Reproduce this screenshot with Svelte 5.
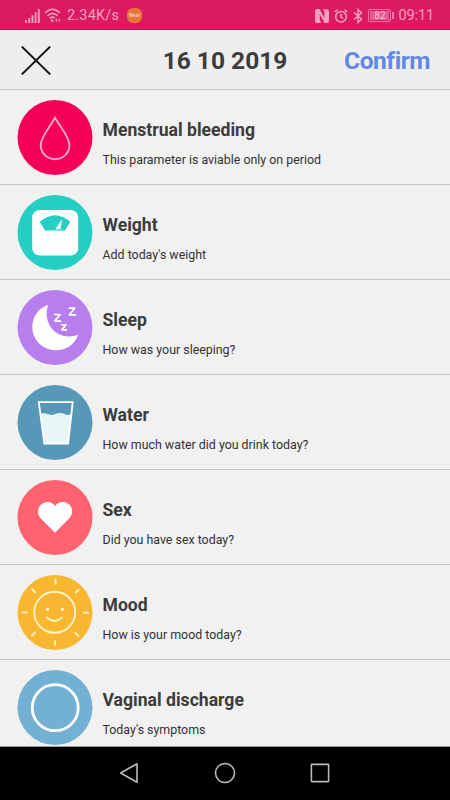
<script lang="ts">
  type Entry = { id: string; title: string; hint: string; color: string };

  const entries: Entry[] = [
    { id: 'bleeding', title: 'Menstrual bleeding', hint: 'This parameter is aviable only on period', color: '#f50057' },
    { id: 'weight', title: 'Weight', hint: "Add today's weight", color: '#25cfc3' },
    { id: 'sleep', title: 'Sleep', hint: 'How was your sleeping?', color: '#b97eee' },
    { id: 'water', title: 'Water', hint: 'How much water did you drink today?', color: '#5798b9' },
    { id: 'sex', title: 'Sex', hint: 'Did you have sex today?', color: '#ff6370' },
    { id: 'mood', title: 'Mood', hint: 'How is your mood today?', color: '#f9b631' },
    { id: 'discharge', title: 'Vaginal discharge', hint: "Today's symptoms", color: '#72b1d4' },
  ];

  const rays = [0, 45, 90, 135, 180, 225, 270, 315];
</script>

<div class="screen">
  <div class="status">
    <svg class="signal" width="15" height="14" viewBox="0 0 15 14">
      <path d="M1 11v3M4.2 9v5M7.4 6.3v7.7M10.6 3.3v10.7M13.8 0v14" />
    </svg>
    <svg class="wifi" width="17" height="15" viewBox="0 0 17 15">
      <path d="M1 5Q8.5-2.5 16 5M3.4 7.8Q8.5 3 13.6 7.8M5.8 10.4Q8.5 8 10.8 10.2" />
      <circle cx="8.2" cy="12.8" r="1.3" />
      <path class="solid" d="M11.2 12.2l1.8-2v4zM16.6 12.2l-1.8-2v4z" />
    </svg>
    <span class="speed">2.34K/s</span>
    <span class="wear">Wear</span>
    <div class="status-right">
      <svg class="nfc" width="14" height="14" viewBox="0 0 14 14">
        <path class="solid" d="M2 0h2.6l4.8 9.2V3.2L8 .3h4Q14 .3 14 2.3v9.4Q14 14 12 14H9.6L4.8 4.8v6L6.2 13.9H2Q0 13.9 0 11.7V2Q0 0 2 0z" />
        <path d="M3.4 11.6V2.6l7.2 9V2.4" />
      </svg>
      <svg class="alarm" width="14" height="14" viewBox="0 0 14 14">
        <circle cx="7" cy="7.7" r="5.3" />
        <path d="M7 4.7v3.4l2.3 1.2M.7 3L3.5.8M13.3 3L10.5.8" />
      </svg>
      <svg class="bluetooth" width="10" height="16" viewBox="0 0 10 16">
        <path d="M1 4.5l7.6 6.8L5 14.5v-13l3.6 3.2L1 11.5" />
      </svg>
      <span class="battery"><span>82</span></span>
      <span class="clock">09:11</span>
    </div>
  </div>

  <header>
    <button class="close" aria-label="Close">
      <svg width="30" height="29" viewBox="0 0 30 29">
        <path d="M.8.6L29.2 28.4M29.2.6L.8 28.4" />
      </svg>
    </button>
    <h1>16 10 2019</h1>
    <button class="confirm">Confirm</button>
  </header>

  <main>
    {#each entries as entry (entry.id)}
      <div class="row">
        <svg class="icon" width="76" height="75" viewBox="-0.5 0 76 75">
          <circle cx="37.5" cy="37.5" r="37.5" fill={entry.color} />
          {#if entry.id === 'bleeding'}
            <path class="drop" d="M37.5 17.6C34 25 23.2 36.5 23.2 45.2a14.4 14 0 0 0 28.8 0C52 36.5 41 25 37.5 17.6z" />
          {:else if entry.id === 'weight'}
            <rect x="14.7" y="15" width="46" height="45.5" rx="7.5" fill="#fff" />
            <path d="M22.2 26.8Q37.5 13.5 52.8 26.8L47.5 35.5H27.5z" fill={entry.color} />
            <path d="M37.8 34.2L44.4 24.2L43.2 34.2z" fill="#fff" />
          {:else if entry.id === 'sleep'}
            <path d="M30.7 14.8C20 18.5 14.8 28 14.8 37.3A23.2 23 0 0 0 38 60.3C48.5 60.3 57.5 54.5 60.7 44.8C55 47 47.5 47.3 41 44C31 39 26.5 26.5 30.7 14.8z" fill="#fff" />
            <path class="zed" d="M36.6 24.5h6.2l-5.8 6.6h6.8" />
            <path class="zed" d="M51.2 18.2h6.2l-5.8 6.6h7" />
            <path class="zed" d="M43.8 34.8h4.8l-4.4 5.1h5.4" />
          {:else if entry.id === 'water'}
            <path d="M22.8 28.7Q27 27.5 31 29.2T39 28.6Q43 27 47 29T53.6 29L50.5 58.3H26.5z" fill="#e8f6f8" />
            <path class="glass" d="M21.3 17.2H55.2L50.6 58.5H26.8z" />
          {:else if entry.id === 'sex'}
            <path d="M37.5 52.8L23.4 38.6C18.7 33.8 20.2 26.8 24.6 23.8C29 20.8 34.7 21.7 37.5 26.2C40.3 21.7 46.7 20.8 50.8 23.8C55.2 26.8 56.3 33.8 51.6 38.6z" fill="#fff" />
          {:else if entry.id === 'mood'}
            <g class="sun">
              <circle cx="37.2" cy="37.3" r="20.5" />
              {#each rays as angle}
                <path d="M38 4.8v4.3" transform="rotate({angle} 37.8 37.6)" />
              {/each}
              <path d="M29 42.6Q37 49.2 44.6 42.6" />
              <circle class="eye" cx="30" cy="34.3" r="1.7" />
              <circle class="eye" cx="45" cy="34.3" r="1.7" />
            </g>
          {:else}
            <circle class="ring" cx="37.7" cy="37.7" r="23" />
          {/if}
        </svg>
        <div class="text">
          <h2>{entry.title}</h2>
          <p>{entry.hint}</p>
        </div>
      </div>
    {/each}
  </main>

  <nav>
    <svg width="20" height="22" viewBox="0 0 20 22">
      <path d="M18 1.8v18.4L1.6 11z" />
    </svg>
    <svg width="22" height="22" viewBox="0 0 22 22">
      <circle cx="11" cy="11" r="9.5" />
    </svg>
    <svg width="20" height="20" viewBox="0 0 20 20">
      <rect x="1.4" y="1.4" width="17.2" height="17.2" rx=".5" />
    </svg>
  </nav>
</div>

<style>
  :global(body) {
    margin: 0;
  }

  .screen {
    width: 450px;
    height: 800px;
    display: flex;
    flex-direction: column;
    overflow: hidden;
    background: #f1f1f1;
    font-family: Roboto, sans-serif;
    color: #3c3c3c;
  }

  svg {
    display: block;
    flex: none;
    fill: none;
  }

  .status {
    flex: none;
    box-sizing: border-box;
    height: 30px;
    padding: 2px 16px 0 25px;
    display: flex;
    align-items: center;
    background: #db1a61;
    border-bottom: 1px solid #c0114f;
    color: #f79fc2;
    font-size: 14.5px;
  }

  .status svg {
    stroke: #f79fc2;
    stroke-width: 1.5;
  }

  .status .signal {
    stroke-width: 1.9;
  }

  .wifi {
    margin-left: 4px;
  }

  .wifi circle,
  .status .solid {
    fill: #f79fc2;
    stroke: none;
  }

  .speed {
    margin-left: 6px;
    width: 60px;
    letter-spacing: 0.2px;
    white-space: nowrap;
  }

  .wear {
    width: 15px;
    height: 15px;
    border-radius: 6px;
    background: #e8743d;
    color: #fbc3a3;
    font-size: 5px;
    font-weight: 700;
    line-height: 15px;
    text-align: center;
  }

  .status-right {
    margin-left: auto;
    display: flex;
    align-items: center;
  }

  .alarm,
  .bluetooth {
    margin-left: 5px;
  }

  .battery {
    position: relative;
    box-sizing: border-box;
    width: 23px;
    height: 13px;
    margin: 0 7px 0 5px;
    padding: 1px;
    border: 1px solid #f079a8;
    border-radius: 2px;
    font-size: 10px;
    line-height: 9px;
    text-align: center;
    color: #fbc4d9;
  }

  .battery span {
    display: block;
    height: 9px;
    background: #e9588f;
  }

  .battery::after {
    content: '';
    position: absolute;
    right: -4px;
    top: 2px;
    width: 2px;
    height: 7px;
    background: #f079a8;
  }

  .clock {
    letter-spacing: -0.1px;
  }

  header {
    flex: none;
    box-sizing: border-box;
    height: 60px;
    padding: 2px 20px 0 21px;
    display: grid;
    grid-template-columns: 1fr auto 1fr;
    align-items: center;
    background: #eee;
    border-bottom: 1px solid #c4c4c4;
  }

  button {
    padding: 0;
    border: 0;
    background: none;
    font-family: inherit;
  }

  .close {
    justify-self: start;
  }

  .close svg {
    margin-top: -1px;
  }

  .close path {
    stroke: #161616;
    stroke-width: 2;
  }

  h1 {
    margin: 0 1px 0 0;
    font-size: 24.5px;
    font-weight: 700;
  }

  .confirm {
    justify-self: end;
    color: #6488e6;
    font-size: 24.5px;
    font-weight: 700;
    letter-spacing: -0.45px;
    font-variant-ligatures: common-ligatures;
  }

  main {
    flex: 1;
    overflow: hidden;
  }

  .row {
    box-sizing: border-box;
    height: 95px;
    padding: 10px 17px 0;
    display: flex;
    border-bottom: 1px solid #c6c6c6;
  }

  .text {
    margin-left: 9.5px;
    padding-top: 19px;
  }

  h2 {
    margin: 0;
    font-size: 17.6px;
    font-weight: 700;
    line-height: 22px;
  }

  p {
    margin: 11px 0 0;
    font-size: 12.4px;
    line-height: 16px;
    color: #333;
  }

  .drop {
    stroke: #ffa6cd;
    stroke-width: 1.9;
  }

  .zed {
    stroke: #fff;
    stroke-width: 1.7;
    stroke-linejoin: bevel;
  }

  .glass {
    stroke: #fff;
    stroke-width: 1.8;
  }

  .sun {
    stroke: #fff3c8;
    stroke-width: 1.9;
    stroke-linecap: round;
  }

  .sun .eye {
    fill: #fff3c8;
    stroke: none;
  }

  .ring {
    stroke: #fff;
    stroke-width: 2.8;
  }

  nav {
    flex: none;
    box-sizing: border-box;
    height: 54px;
    padding: 0 120px 1px 119px;
    display: flex;
    align-items: center;
    justify-content: space-between;
    background: #000;
    border-top: 1px solid #999;
  }

  nav svg {
    stroke: #b9b9b9;
    stroke-width: 1.6;
    stroke-linejoin: round;
  }
</style>
